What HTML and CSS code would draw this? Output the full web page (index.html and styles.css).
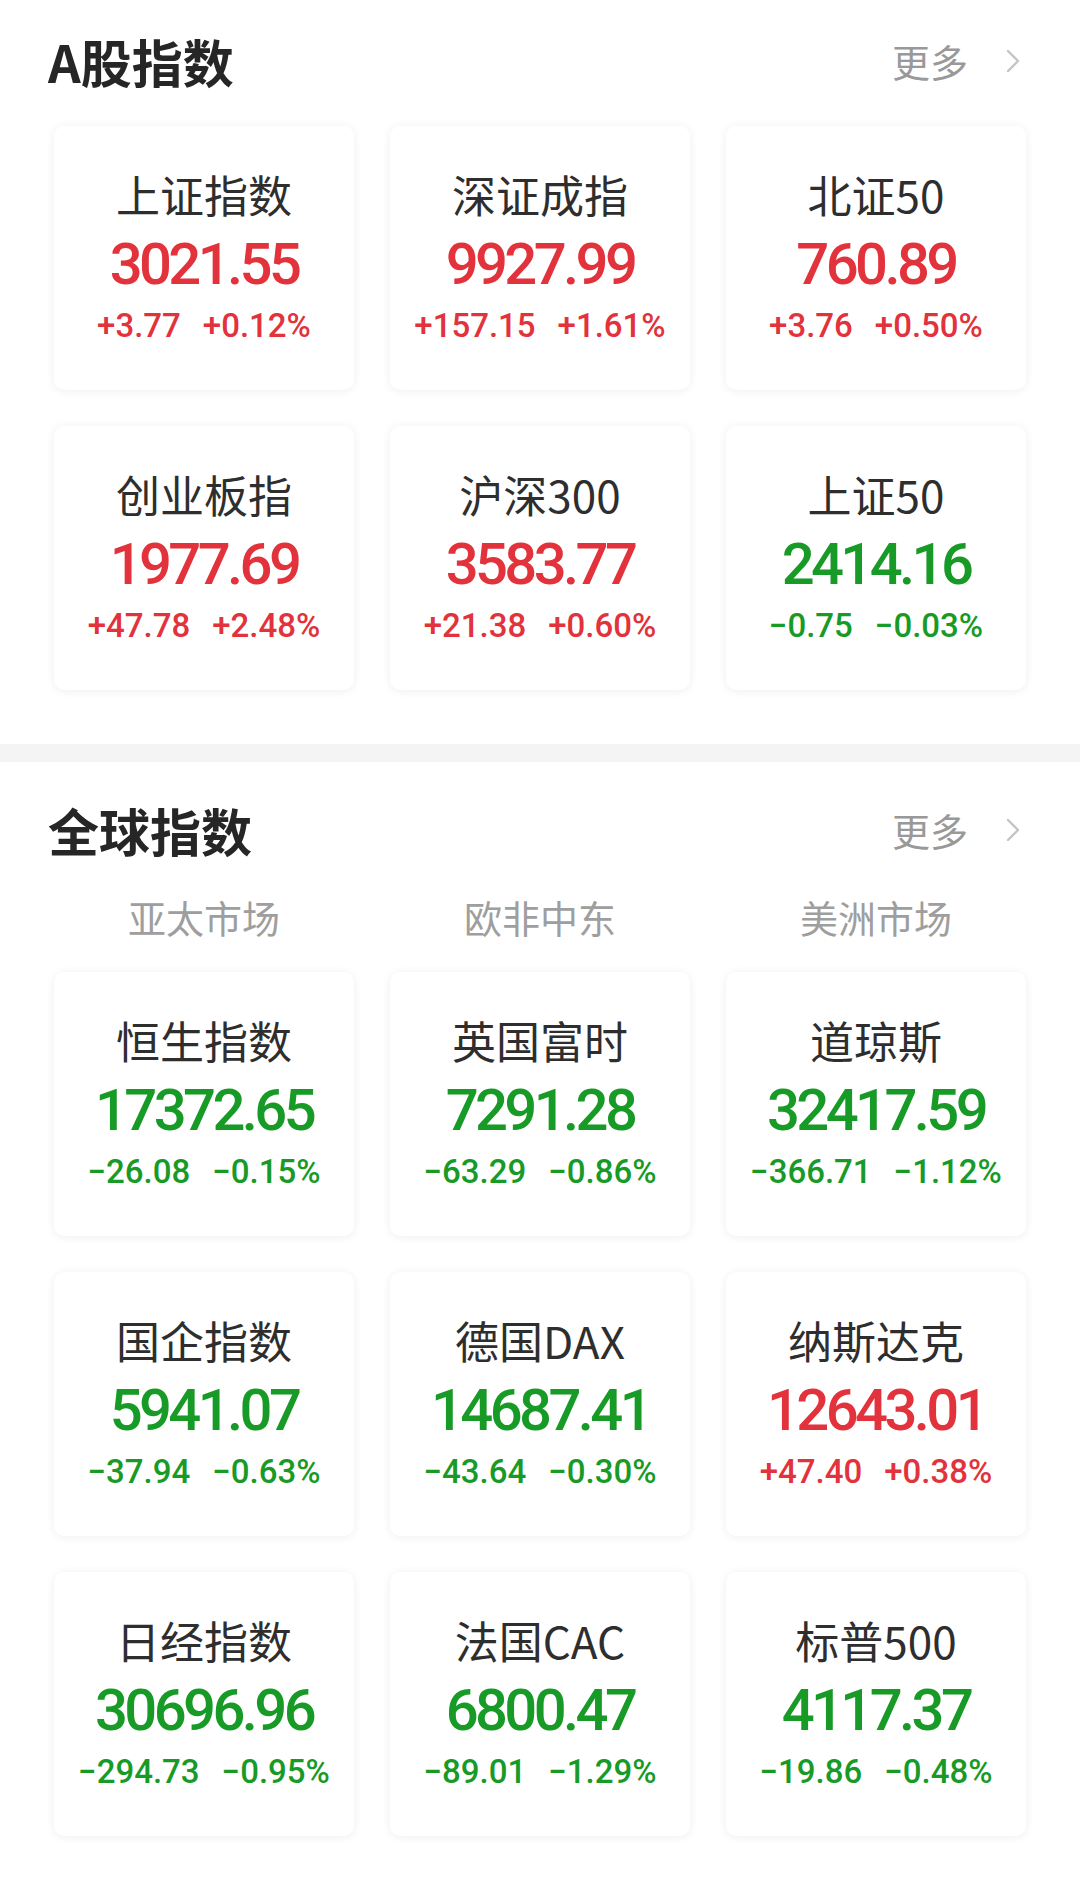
FILE: index.html
```html
<!DOCTYPE html>
<html lang="zh-CN">
<head>
<meta charset="utf-8">
<title>指数</title>
<link rel="stylesheet" href="styles.css">
</head>
<body>
<section class="section section-a">
  <header class="sec-head">
    <h2 class="sec-title">A股指数</h2>
    <a class="more">更多<svg class="chev" viewBox="0 0 14 24" width="14" height="24"><path d="M2 2 L12 12 L2 22" fill="none" stroke="#c4c4c4" stroke-width="2.4" stroke-linecap="round" stroke-linejoin="round"/></svg></a>
  </header>
  <div class="grid">
    <div class="card"><div class="name">上证指数</div><div class="price up">3021.55</div><div class="chg up"><span>+3.77</span><span>+0.12%</span></div></div>
    <div class="card"><div class="name">深证成指</div><div class="price up">9927.99</div><div class="chg up"><span>+157.15</span><span>+1.61%</span></div></div>
    <div class="card"><div class="name">北证50</div><div class="price up">760.89</div><div class="chg up"><span>+3.76</span><span>+0.50%</span></div></div>
    <div class="card"><div class="name">创业板指</div><div class="price up">1977.69</div><div class="chg up"><span>+47.78</span><span>+2.48%</span></div></div>
    <div class="card"><div class="name">沪深300</div><div class="price up">3583.77</div><div class="chg up"><span>+21.38</span><span>+0.60%</span></div></div>
    <div class="card"><div class="name">上证50</div><div class="price down">2414.16</div><div class="chg down"><span>−0.75</span><span>−0.03%</span></div></div>
  </div>
</section>
<div class="divider"></div>
<section class="section section-g">
  <header class="sec-head g-head">
    <h2 class="sec-title">全球指数</h2>
    <a class="more">更多<svg class="chev" viewBox="0 0 14 24" width="14" height="24"><path d="M2 2 L12 12 L2 22" fill="none" stroke="#c4c4c4" stroke-width="2.4" stroke-linecap="round" stroke-linejoin="round"/></svg></a>
  </header>
  <div class="tabs">
    <div class="tab">亚太市场</div>
    <div class="tab">欧非中东</div>
    <div class="tab">美洲市场</div>
  </div>
  <div class="grid">
    <div class="card"><div class="name">恒生指数</div><div class="price down">17372.65</div><div class="chg down"><span>−26.08</span><span>−0.15%</span></div></div>
    <div class="card"><div class="name">英国富时</div><div class="price down">7291.28</div><div class="chg down"><span>−63.29</span><span>−0.86%</span></div></div>
    <div class="card"><div class="name">道琼斯</div><div class="price down">32417.59</div><div class="chg down"><span>−366.71</span><span>−1.12%</span></div></div>
    <div class="card"><div class="name">国企指数</div><div class="price down">5941.07</div><div class="chg down"><span>−37.94</span><span>−0.63%</span></div></div>
    <div class="card"><div class="name">德国DAX</div><div class="price down">14687.41</div><div class="chg down"><span>−43.64</span><span>−0.30%</span></div></div>
    <div class="card"><div class="name">纳斯达克</div><div class="price up">12643.01</div><div class="chg up"><span>+47.40</span><span>+0.38%</span></div></div>
    <div class="card"><div class="name">日经指数</div><div class="price down">30696.96</div><div class="chg down"><span>−294.73</span><span>−0.95%</span></div></div>
    <div class="card"><div class="name">法国CAC</div><div class="price down">6800.47</div><div class="chg down"><span>−89.01</span><span>−1.29%</span></div></div>
    <div class="card"><div class="name">标普500</div><div class="price down">4117.37</div><div class="chg down"><span>−19.86</span><span>−0.48%</span></div></div>
  </div>
</section>
</body>
</html>
```
FILE: styles.css
```css
* { box-sizing: border-box; }
html, body { margin: 0; padding: 0; background: #ffffff; }
body {
  width: 1080px;
  font-family: "Noto Sans CJK SC", "Noto Sans", sans-serif;
  color: #333;
}
.section-a { padding-bottom: 54px; }
.section-g { padding-bottom: 48px; }
.sec-head {
  height: 122px;
  display: flex;
  align-items: center;
  justify-content: space-between;
  padding: 0 60px 0 48px;
}
.g-head { height: 136px; }
.sec-title {
  margin: 0;
  font-size: 51px;
  font-weight: 700;
  color: #262626;
  line-height: 1;
}
.more {
  display: flex;
  align-items: center;
  font-size: 38px;
  line-height: 1;
  color: #999;
  gap: 38px;
}
.chev { display: block; }
.grid {
  margin-top: 4px;
  display: grid;
  grid-template-columns: repeat(3, 300px);
  grid-auto-rows: 264px;
  column-gap: 36px;
  row-gap: 36px;
  padding-left: 54px;
}
.card {
  background: #fff;
  border-radius: 10px;
  box-shadow: 0 1px 10px rgba(0, 0, 0, 0.07);
  display: flex;
  flex-direction: column;
  align-items: center;
  padding-top: 46px;
}
.name {
  font-size: 44px;
  line-height: 1;
  color: #2e2e2e;
  height: 44px;
}
.price {
  margin-top: 19px;
  font-family: Roboto, "Liberation Sans", sans-serif;
  font-weight: 500;
  font-size: 58px;
  line-height: 1;
  height: 58px;
  letter-spacing: -3.6px;
}
.chg {
  margin-top: 16px;
  font-family: Roboto, "Liberation Sans", sans-serif;
  font-weight: 500;
  font-size: 33px;
  line-height: 1;
  display: flex;
  gap: 22px;
  letter-spacing: 0;
}
.up { color: #e2323c; }
.down { color: #189a27; }
.divider { height: 18px; background: #f4f4f4; }
.tabs {
  display: grid;
  grid-template-columns: repeat(3, 300px);
  column-gap: 36px;
  padding-left: 54px;
}
.tab {
  text-align: center;
  font-size: 38px;
  line-height: 1;
  color: #9e9e9e;
}
.section-g .grid { margin-top: 36px; }
```
